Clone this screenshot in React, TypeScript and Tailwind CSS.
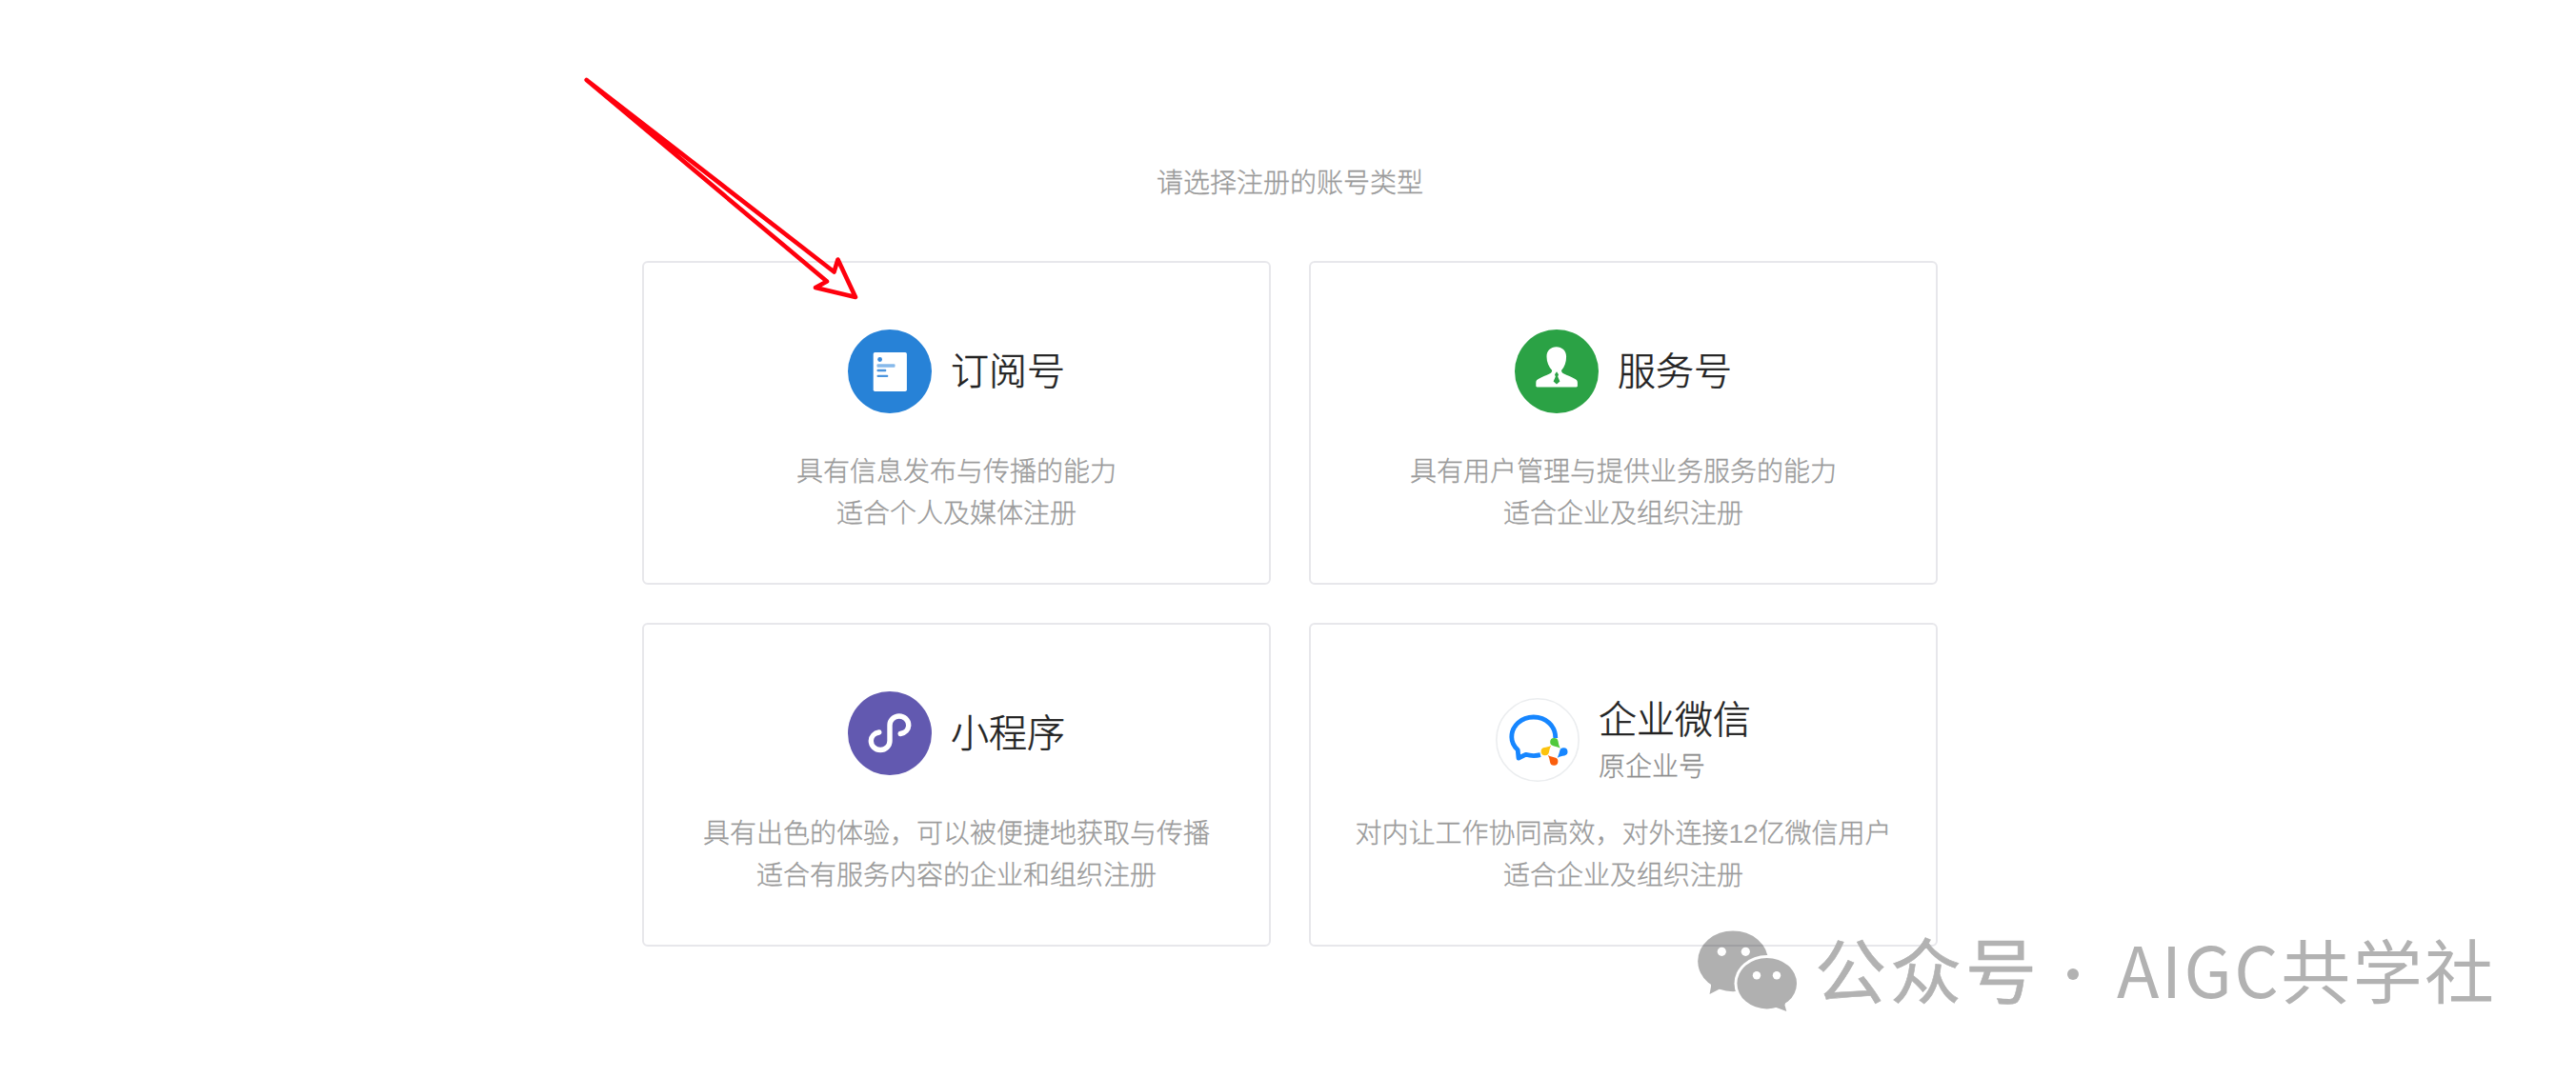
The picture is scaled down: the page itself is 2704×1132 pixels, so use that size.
import type { ReactNode } from "react";
import clsx from "clsx";

interface AccountType {
  name: string;
  alias?: string;
  icon: ReactNode;
  lines: ReactNode[];
}

const SubscriptionIcon = () => (
  <svg viewBox="0 0 88 88" className="h-22 w-22">
    <circle cx="44" cy="44" r="44" fill="#2782d7" />
    <rect x="26.7" y="24" width="35.2" height="41" rx="1.8" fill="#fff" />
    <circle cx="33.6" cy="31.5" r="2.4" fill="#3a8bdb" />
    <rect x="30.5" y="36.2" width="19" height="3.6" rx="1" fill="#86b9ea" />
    <rect x="30.5" y="41.8" width="9.8" height="2.4" rx="1" fill="#4c95de" />
    <rect x="30.5" y="47.7" width="11.8" height="2.4" rx="1" fill="#4c95de" />
  </svg>
);

const ServiceIcon = () => (
  <svg viewBox="0 0 88 88" className="h-22 w-22">
    <circle cx="44" cy="44" r="44" fill="#2ba245" />
    <path
      d="M43.7 18.2c-6 0-10.2 4.2-10.2 10.300 0 5.800 2.300 10.800 5.700 14.500-.1 1.600-.9 2.700-2.200 3.300-4 1.900-8.700 3.600-12.200 5.700-1.700 1-2.500 2.100-2.500 3.700v3.500c0 .7.500 1.200 1.200 1.200h41.200c.7 0 1.200-.5 1.200-1.200v-3.500c0-1.600-.8-2.700-2.500-3.700-3.500-2.100-8.200-3.800-12.200-5.700-1.300-.6-2.100-1.700-2.200-3.300 3.400-3.700 5.100-8.700 5.100-14.500 0-6.100-4.400-10.300-10.400-10.300z"
      fill="#fff"
    />
    <path d="M44 44.3l2 2.900-.8 2.200 2.200 5-3.400 3.200-3.400-3.200 2.200-5-.8-2.200z" fill="#2ba245" />
  </svg>
);

const MiniProgramIcon = () => (
  <svg viewBox="0 0 88 88" className="h-22 w-22">
    <circle cx="44" cy="44" r="44" fill="#6259b0" />
    <path
      d="M55.2 44.5c5-.8 8.5-4.5 8.500-9A9.85 9.5 0 0 0 44 35.5V52a9.85 9.5 0 0 1-19.7 0c0-4.500 3.500-8.200 8.500-9"
      fill="none"
      stroke="#fff"
      strokeWidth="5.4"
      strokeLinecap="round"
    />
  </svg>
);

const WeComIcon = () => (
  <svg viewBox="0 0 88 88" className="mt-[7px] h-22 w-22">
    <circle cx="44" cy="44" r="43.2" fill="#fff" stroke="#ebedef" strokeWidth="1.6" />
    <path
      d="M62.8 42C62.8 29 52.5 20 39.8 20S16.8 29 16.8 41c0 5.500 2.600 10 6.400 13.500L24 63l7.500-3.700c5 1.500 10.500 1.600 15.500.4"
      fill="none"
      stroke="#1686ff"
      strokeWidth="4.8"
      strokeLinejoin="round"
    />
    <path d="M67.8 52.8c-2.800-1.700-5-2-7.300-2.600a4.200 4.200 0 1 1 5-5c.5 2.500.8 4.900 2.300 7.600z" fill="#51c93c" />
    <path d="M64.8 62.7c1.500-3 1.700-5 2.400-7.200a4.200 4.200 0 1 1 5 5c-2.400.5-4.600.7-7.400 2.200z" fill="#1686ff" />
    <path d="M54.8 60c2.800 1.600 5 1.900 7.300 2.500a4.200 4.200 0 1 1-5 5c-.5-2.500-.8-4.800-2.300-7.500z" fill="#fa5f0d" />
    <path d="M58.3 49.7c-1.600 2.900-1.800 5-2.400 7.300a4.200 4.200 0 1 1-5-5c2.400-.5 4.700-.8 7.400-2.300z" fill="#fcc30f" />
  </svg>
);

const WechatLogo = () => (
  <svg viewBox="0 0 110 90" className="h-[90px] w-[110px]">
    <mask id="bubbles">
      <g fill="#fff">
        <ellipse cx="39.1" cy="34.3" rx="36.9" ry="31.9" />
        <path d="M16 56v5l-1.500 8L28 62z" />
      </g>
      <g fill="#000">
        <circle cx="27.3" cy="24.3" r="4.6" />
        <circle cx="52.3" cy="24.3" r="4.6" />
        <ellipse cx="74.7" cy="57.7" rx="34.2" ry="29.6" />
      </g>
      <g fill="#fff">
        <ellipse cx="74.7" cy="57.7" rx="31.3" ry="26.7" />
        <path d="M95 74l-1.500 6.500 1.800 6.500L82 82z" />
      </g>
      <g fill="#000">
        <circle cx="64" cy="49.3" r="4.2" />
        <circle cx="85" cy="49.3" r="4.2" />
      </g>
    </mask>
    <rect width="110" height="90" fill="#000" fillOpacity="0.31" mask="url(#bubbles)" />
  </svg>
);

const accountTypes: AccountType[] = [
  {
    name: "订阅号",
    icon: <SubscriptionIcon />,
    lines: ["具有信息发布与传播的能力", "适合个人及媒体注册"],
  },
  {
    name: "服务号",
    icon: <ServiceIcon />,
    lines: ["具有用户管理与提供业务服务的能力", "适合企业及组织注册"],
  },
  {
    name: "小程序",
    icon: <MiniProgramIcon />,
    lines: ["具有出色的体验，可以被便捷地获取与传播", "适合有服务内容的企业和组织注册"],
  },
  {
    name: "企业微信",
    alias: "原企业号",
    icon: <WeComIcon />,
    lines: [
      <>
        对内让工作协同高效，对外连接
        <span className="text-[#a4a4a4] [-webkit-text-stroke:0px]">12</span>
        亿微信用户
      </>,
      "适合企业及组织注册",
    ],
  },
];

const AccountCard = ({ name, alias, icon, lines }: AccountType) => (
  <a className="flex h-[340px] flex-col items-center rounded-md border-2 border-[#e7e7eb] pt-[70px]">
    <div className="flex h-[128px] items-start gap-5">
      {icon}
      <div>
        <h3
          className={clsx(
            "text-[40px] font-light text-[#222] [-webkit-text-stroke:0.5px_#222]",
            alias ? "leading-[60px]" : "leading-[88px]"
          )}
        >
          {name}
        </h3>
        {alias && <p className="text-[28px] leading-[40px] text-[#8d8d8d]">{alias}</p>}
      </div>
    </div>
    {lines.map((line, index) => (
      <p key={index} className="text-[28px] leading-11 whitespace-nowrap">
        {line}
      </p>
    ))}
  </a>
);

const Arrow = () => (
  <svg viewBox="0 0 300 240" className="absolute top-[80px] left-[610px] h-[240px] w-[300px]">
    <path
      d="M5.7 4L265.5 205.5L269.5 192.5L288 232L246 222L258 215.5Z"
      fill="none"
      stroke="#ff000d"
      strokeWidth="4.6"
      strokeLinejoin="round"
    />
  </svg>
);

const Watermark = () => (
  <div className="absolute top-[975px] left-[1780px] flex h-[90px] items-start font-['Noto_Sans_CJK_SC',sans-serif] font-normal whitespace-nowrap text-[#b2b2b2]">
    <WechatLogo />
    <span className="-mt-1 ml-[15px] text-[75px] leading-[90px] tracking-[4px] [-webkit-text-stroke:0.6px_#b2b2b2]">
      公众号
    </span>
    <span className="mt-[42px] ml-[28px] h-3 w-3 rounded-full bg-[#b2b2b2]" />
    <span className="-mt-1 ml-10 text-[73px] leading-[90px] tracking-[2.4px] [-webkit-text-stroke:0px]">
      AIGC共学社
    </span>
  </div>
);

const App = () => {
  return (
    <main className="relative min-h-[1132px] w-full overflow-hidden bg-white pt-[171px] pl-[4px] font-['Liberation_Sans','Noto_Sans_CJK_SC',sans-serif] font-light text-[#9a9a9a] [-webkit-text-stroke:0.3px]">
      <p className="text-center text-[28px] leading-11">请选择注册的账号类型</p>
      <div className="mx-auto mt-[59px] grid w-[1360px] grid-cols-2 gap-10">
        {accountTypes.map((item) => (
          <AccountCard key={item.name} {...item} />
        ))}
      </div>
      <Arrow />
      <Watermark />
    </main>
  );
};

export default App;
